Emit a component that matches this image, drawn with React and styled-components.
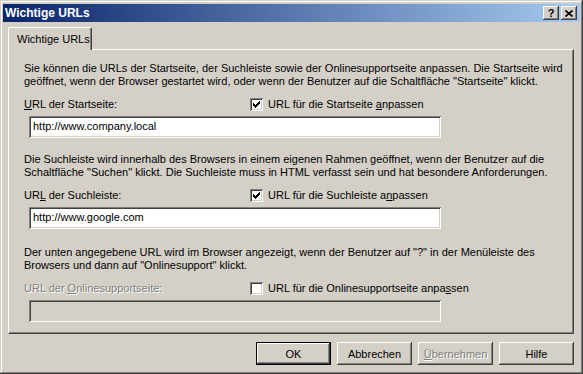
import React from 'react'
import styled, { createGlobalStyle } from 'styled-components'

const Global = createGlobalStyle`
    html, body { margin: 0; padding: 0; background: #d4d0c8; }
    body { font-family: "Liberation Sans", Arial, sans-serif; font-size: 11px; }
`;

const raised = `
    box-shadow: inset -1px -1px #404040, inset 1px 1px #ffffff,
        inset -2px -2px #808080, inset 2px 2px #d4d0c8;
`;

const sunken = `
    box-shadow: inset 1px 1px #808080, inset -1px -1px #ffffff,
        inset 2px 2px #404040, inset -2px -2px #d4d0c8;
`;

const Window = styled.div`
    width: 583px;
    height: 374px;
    box-sizing: border-box;
    padding: 4px 3px 3px 3px;
    background: #d4d0c8;
    display: flex;
    flex-direction: column;
    box-shadow: inset -1px -1px #404040, inset 1px 1px #d4d0c8,
        inset -2px -2px #808080, inset 2px 2px #ffffff;
    color: #000;
`;

const TitleBar = styled.div`
    height: 18px;
    display: flex;
    align-items: center;
    padding: 0 3px 0 2px;
    background: linear-gradient(to right, #0a246a, #a6caf0);
`;

const Title = styled.div`
    flex: 1;
    color: #fff;
    font-weight: bold;
    font-size: 12px;
`;

const CapButton = styled.div`
    width: 16px;
    height: 14px;
    margin-left: ${p => p.$gap || 0}px;
    display: flex;
    align-items: center;
    justify-content: center;
    background: #d4d0c8;
    font-weight: bold;
    font-size: 11px;
    ${raised}
`;

const Body = styled.div`
    flex: 1;
    display: flex;
    flex-direction: column;
    padding: 5px 6px 6px 5px;
`;

const TabStrip = styled.div`
    display: flex;
    height: 22px;
    position: relative;
    z-index: 1;
`;

const Tab = styled.div`
    width: 84px;
    height: 23px;
    box-sizing: border-box;
    padding: 5px 0 0 8px;
    background: #d4d0c8;
    border-top: 1px solid #fff;
    border-left: 1px solid #fff;
    border-right: 1px solid #404040;
    box-shadow: inset -1px 0 #808080;
    border-radius: 2px 2px 0 0;
`;

const Panel = styled.div`
    height: 285px;
    box-sizing: border-box;
    padding: 12px 14px 0 15px;
    border-top: 1px solid #fff;
    border-left: 1px solid #fff;
    border-right: 1px solid #404040;
    border-bottom: 1px solid #404040;
    box-shadow: inset -1px -1px #808080;
`;

const Section = styled.div`
    margin-top: ${p => p.$top || 0}px;
`;

const Para = styled.p`
    margin: 0 0 10px 0;
    line-height: 13px;
    white-space: nowrap;
`;

const FieldHead = styled.div`
    display: grid;
    grid-template-columns: 226px auto;
    align-items: center;
    height: 13px;
    line-height: 13px;
    margin-bottom: 5px;
`;

const Label = styled.span`
    color: ${p => p.$disabled ? '#808080' : '#000'};
    text-shadow: ${p => p.$disabled ? '1px 1px #fff' : 'none'};
`;

const Check = styled.label`
    display: flex;
    align-items: center;
    gap: 5px;
`;

const Box = styled.span`
    width: 13px;
    height: 13px;
    flex: none;
    box-sizing: border-box;
    display: flex;
    align-items: center;
    justify-content: center;
    background: #fff;
    ${sunken}
`;

const Field = styled.div`
    width: 412px;
    height: 22px;
    margin-left: 5px;
    box-sizing: border-box;
    padding: 4px 4px 0 4px;
    line-height: 13px;
    background: ${p => p.$disabled ? '#d4d0c8' : '#fff'};
    ${sunken}
`;

const ButtonRow = styled.div`
    display: flex;
    justify-content: flex-end;
    gap: 6px;
    margin-top: 8px;
`;

const Button = styled.div`
    width: 75px;
    height: 23px;
    box-sizing: border-box;
    display: flex;
    align-items: center;
    justify-content: center;
    background: #d4d0c8;
    color: ${p => p.$disabled ? '#808080' : '#000'};
    text-shadow: ${p => p.$disabled ? '1px 1px #fff' : 'none'};
    ${p => p.$default ? `
        border: 1px solid #000;
    ` : ''}
    ${raised}
`;

const Key = styled.span`
    text-decoration: underline;
`;

function Tick() {
    return (
        <svg width="7" height="7" viewBox="0 0 7 7" shapeRendering="crispEdges">
            <path fill="#000" d="M6 0h1v3h-1v1h-1v1h-1v1h-1v1h-1v-1h-1v-1h-1v-3h1v1h1v1h1v-1h1v-1h1z" />
        </svg>
    );
}

function CloseGlyph() {
    return (
        <svg width="8" height="7" viewBox="0 0 8 7">
            <path d="M0.5 0.5 L7.5 6.5 M7.5 0.5 L0.5 6.5" stroke="#000" strokeWidth="1.6" />
        </svg>
    );
}

export default function App() {
    return (
        <>
            <Global />
            <Window>
                <TitleBar>
                    <Title>Wichtige URLs</Title>
                    <CapButton>?</CapButton>
                    <CapButton $gap={2}><CloseGlyph /></CapButton>
                </TitleBar>
                <Body>
                    <TabStrip>
                        <Tab>Wichtige URLs</Tab>
                    </TabStrip>
                    <Panel>
                        <Section>
                            <Para>
                                Sie können die URLs der Startseite, der Suchleiste sowie der Onlinesupportseite anpassen. Die Startseite wird<br />
                                geöffnet, wenn der Browser gestartet wird, oder wenn der Benutzer auf die Schaltfläche "Startseite" klickt.
                            </Para>
                            <FieldHead>
                                <Label><Key>U</Key>RL der Startseite:</Label>
                                <Check><Box><Tick /></Box><span>URL für die Startseite <Key>a</Key>npassen</span></Check>
                            </FieldHead>
                            <Field>http://www.company.local</Field>
                        </Section>
                        <Section $top={15}>
                            <Para>
                                Die Suchleiste wird innerhalb des Browsers in einem eigenen Rahmen geöffnet, wenn der Benutzer auf die<br />
                                Schaltfläche "Suchen" klickt. Die Suchleiste muss in HTML verfasst sein und hat besondere Anforderungen.
                            </Para>
                            <FieldHead>
                                <Label>UR<Key>L</Key> der Suchleiste:</Label>
                                <Check><Box><Tick /></Box><span>URL für die Suchleiste a<Key>n</Key>passen</span></Check>
                            </FieldHead>
                            <Field>http://www.google.com</Field>
                        </Section>
                        <Section $top={17}>
                            <Para>
                                Der unten angegebene URL wird im Browser angezeigt, wenn der Benutzer auf "?" in der Menüleiste des<br />
                                Browsers und dann auf "Onlinesupport" klickt.
                            </Para>
                            <FieldHead>
                                <Label $disabled>URL der <Key>O</Key>nlinesupportseite:</Label>
                                <Check><Box /><span>URL für die Onlinesupportseite anpa<Key>s</Key>sen</span></Check>
                            </FieldHead>
                            <Field $disabled />
                        </Section>
                    </Panel>
                    <ButtonRow>
                        <Button $default>OK</Button>
                        <Button>Abbrechen</Button>
                        <Button $disabled><Key>Ü</Key>bernehmen</Button>
                        <Button>Hilfe</Button>
                    </ButtonRow>
                </Body>
            </Window>
        </>
    );
}
